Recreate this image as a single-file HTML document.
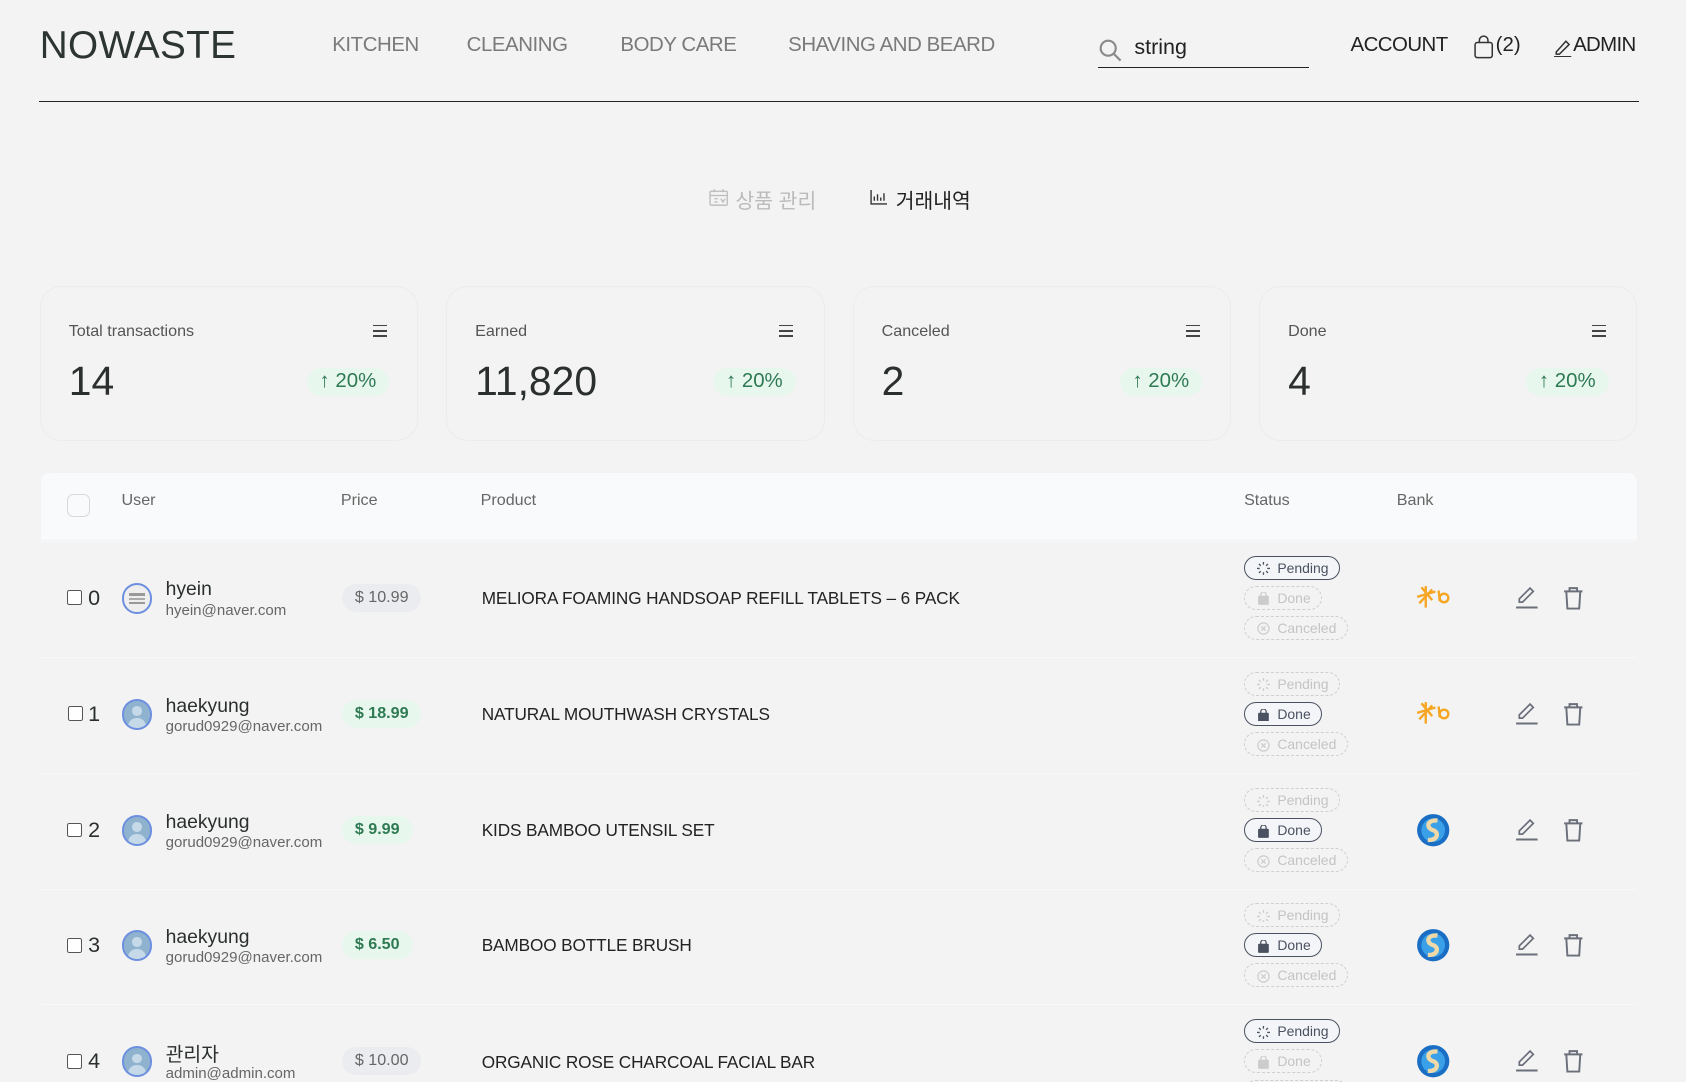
<!DOCTYPE html>
<html><head><meta charset="utf-8">
<style>
html,body{margin:0;padding:0;background:#f3f3f3;overflow:hidden}
#w{position:relative;width:1568px;height:1006px;zoom:1.07526;font-family:"Liberation Sans","Noto Sans CJK KR",sans-serif;color:#2a2f2d}
.a{position:absolute;white-space:nowrap}
.nav{font-size:19px;color:#7a7a7a;top:32px;letter-spacing:-0.4px}
.card{position:absolute;top:266px;width:350px;height:142px;border:1px solid #ececec;border-radius:20px;background:#f3f3f3}
.card .lb{position:absolute;left:26px;top:33px;font-size:15px;color:#555}
.card .mn{position:absolute;right:28px;top:35px;width:13px}
.card .mn i{display:block;height:1.5px;background:#444;margin-bottom:3.5px}
.card .v{position:absolute;left:26px;top:66px;font-size:38px;color:#2b2f2e}
.card .bd{position:absolute;right:26px;top:75px;height:26px;padding:0 12px;border-radius:13px;background:#e8f7ee;color:#2e7a52;font-size:19px;line-height:26px}
.th{font-size:15px;color:#666;top:457px}
.row{position:absolute;left:38px;width:1484px;height:107px;border-top:1px solid #f8f8f8}
.cb{position:absolute;left:24px;width:12px;height:12px;border:1.5px solid #555;border-radius:2px;background:#fff}
.av{position:absolute;width:25px;height:25px;border:2px solid #6d8fe0;border-radius:50%;background:#8fb3cf;overflow:hidden}
.av i{position:absolute;left:8px;top:5px;width:9px;height:9px;border-radius:50%;background:#c5d9e8}
.av b{position:absolute;left:4px;top:16px;width:17px;height:12px;border-radius:8px 8px 0 0;background:#c5d9e8}
.pr{position:absolute;height:26px;line-height:26px;padding:0 12px;border-radius:13px;font-size:15px}
.pg{background:#ebecef;color:#666}
.pgr{background:#e8f7ee;color:#2e7a52;font-weight:bold}
.pd{font-size:16px;color:#222;letter-spacing:-0.1px}
.st{position:absolute;left:1157px;height:22px;line-height:22px;border-radius:12px;font-size:13px;padding:0 10px 0 30px;box-sizing:border-box}
.st.on{border:1px solid #4a5160;color:#4a5160;background:#f4f5f8}
.st.off{border:1px dashed #cfcfcf;color:#c4c4c4}
.st svg{position:absolute;left:11px;top:5px}
</style></head><body><div id="w">
<div class="a" style="left:37px;top:22px;font-size:36px;color:#2c3531;letter-spacing:0.3px">NOWASTE</div>
<div class="a nav" style="left:309px">KITCHEN</div>
<div class="a nav" style="left:434px">CLEANING</div>
<div class="a nav" style="left:577px">BODY CARE</div>
<div class="a nav" style="left:733px">SHAVING AND BEARD</div>
<svg class="a" style="left:1021px;top:35px" width="24" height="24" viewBox="0 0 24 24" fill="none" stroke="#8a8a8a" stroke-width="2"><circle cx="9.5" cy="9.5" r="7"/><path d="M14.5 14.5 L21 21"/></svg>
<div class="a" style="left:1055px;top:33px;font-size:20px;color:#222">string</div>
<div class="a" style="left:1021px;top:62px;width:196px;height:1.5px;background:#222"></div>
<div class="a" style="left:1256px;top:32px;font-size:19px;color:#222;letter-spacing:-0.5px">ACCOUNT</div>
<svg class="a" style="left:1371px;top:33px" width="18" height="22" viewBox="0 0 18 22" fill="none" stroke="#333" stroke-width="1.4"><rect x="1" y="7" width="16" height="14" rx="2"/><path d="M5 7V5a4 4 0 0 1 8 0v2"/></svg>
<div class="a" style="left:1391px;top:32px;font-size:19px;color:#222">(2)</div>
<svg class="a" style="left:1444px;top:35px" width="18" height="18" viewBox="0 0 18 18" fill="none" stroke="#333" stroke-width="1.4"><path d="M3 13 L12 3 L15 6 L6 15 L3 15Z"/><path d="M1 17.5H17"/></svg>
<div class="a" style="left:1463px;top:32px;font-size:19px;color:#222;letter-spacing:-0.6px">ADMIN</div>
<div class="a" style="left:36px;top:94px;width:1488px;height:1.3px;background:#222"></div>

<svg class="a" style="left:659px;top:175px" width="18" height="17" viewBox="0 0 18 17" fill="none" stroke="#bbb" stroke-width="1.2"><rect x="1" y="3" width="16" height="13" rx="1"/><path d="M1 7H17M5 1V4M13 1V4M5 10h3M5 13h3M11 10l2 3 2-3"/></svg>
<div class="a" style="left:684px;top:171px;font-size:19px;color:#bbb">상품 관리</div>
<svg class="a" style="left:809px;top:177px" width="16" height="14" viewBox="0 0 16 14" fill="none" stroke="#333" stroke-width="1.3"><path d="M1 0V13H16M4 10V6M7 10V4M10 10V7M13 10V3"/></svg>
<div class="a" style="left:833px;top:171px;font-size:19px;color:#222">거래내역</div>

<div class="card" style="left:37px"><div class="lb">Total transactions</div><div class="mn"><i></i><i></i><i></i></div><div class="v">14</div><div class="bd">↑ 20%</div></div>
<div class="card" style="left:415px"><div class="lb">Earned</div><div class="mn"><i></i><i></i><i></i></div><div class="v">11,820</div><div class="bd">↑ 20%</div></div>
<div class="card" style="left:793px"><div class="lb">Canceled</div><div class="mn"><i></i><i></i><i></i></div><div class="v">2</div><div class="bd">↑ 20%</div></div>
<div class="card" style="left:1171px"><div class="lb">Done</div><div class="mn"><i></i><i></i><i></i></div><div class="v">4</div><div class="bd">↑ 20%</div></div>

<div class="a" style="left:38px;top:440px;width:1484px;height:62px;background:#f9fafb;border-radius:8px 8px 0 0"></div>
<div class="a" style="left:62px;top:459px;width:20px;height:20px;border:1.5px solid #d8d8d8;border-radius:6px;background:#f9fafb"></div>
<div class="a th" style="left:113px">User</div>
<div class="a th" style="left:317px">Price</div>
<div class="a th" style="left:447px">Product</div>
<div class="a th" style="left:1157px">Status</div>
<div class="a th" style="left:1299px">Bank</div>

<svg width="0" height="0" style="position:absolute"><defs>
<g id="spin"><path d="M6 0v2.5M6 9.5V12M0 6h2.5M9.5 6H12M1.8 1.8l1.7 1.7M8.5 8.5l1.7 1.7M1.8 10.2l1.7-1.7M8.5 3.5l1.7-1.7" stroke-width="1.2"/></g>
<g id="bag"><rect x="1" y="3.5" width="10" height="8.5" rx="1" fill="currentColor" stroke="none"/><path d="M3.5 4V2.5a2.5 2.5 0 0 1 5 0V4" stroke-width="1.2"/></g>
<g id="x"><circle cx="6" cy="6" r="5.2" stroke-width="1.1"/><path d="M4 4l4 4M8 4l-4 4" stroke-width="1.1"/></g>
<g id="edit"><path d="M4 15 L4 12 L14 2 L17 5 L7 15Z" fill="none" stroke="#6a6f7a" stroke-width="1.6"/><path d="M1 20H21" stroke="#6a6f7a" stroke-width="1.8"/></g>
<g id="trash"><path d="M2 5H19M7 5V2H14V5M4 5L5 21H16L17 5" fill="none" stroke="#6a6f7a" stroke-width="1.8"/></g>
<g id="kb"><path d="M2 12L19 7M6 3L16 15M10 2L10 22M4 18L16 5" stroke="#f5a623" stroke-width="2.2" fill="none"/><path d="M22 6 L23 16 M23 13 a4 4 0 1 0 8 0 a4 4 0 1 0 -8 0" stroke="#f5a623" stroke-width="2.2" fill="none"/></g>
<g id="sh"><circle cx="16" cy="16" r="15" fill="#1a6fc4"/><circle cx="16" cy="16" r="11" fill="#3aa0e8"/><path d="M20 7 C10 6 9 14 16 16 C22 18 20 26 11 25" stroke="#f0d9a8" stroke-width="4" fill="none"/></g>
</defs></svg>

<!-- row 0 -->
<div class="row" style="top:503px"></div>
<div class="cb" style="left:62px;top:549px;position:absolute"></div><div class="a" style="left:82px;top:545px;font-size:20px">0</div>
<div class="a av" style="left:113px;top:542px;background:#eee"><span style="position:absolute;left:5px;top:8px;width:15px;height:2px;background:#999"></span><span style="position:absolute;left:5px;top:12px;width:15px;height:2px;background:#aaa"></span><span style="position:absolute;left:5px;top:16px;width:15px;height:2px;background:#999"></span></div>
<div class="a" style="left:154px;top:538px;font-size:18px">hyein</div><div class="a" style="left:154px;top:560px;font-size:14px;color:#666">hyein@naver.com</div>
<div class="a pr pg" style="left:318px;top:543px">$ 10.99</div>
<div class="a pd" style="left:448px;top:547px">MELIORA FOAMING HANDSOAP REFILL TABLETS – 6 PACK</div>
<div class="st on" style="top:517px">Pending<svg width="12" height="12" stroke="#4a5160" fill="none"><use href="#spin"/></svg></div>
<div class="st off" style="top:545px">Done<svg width="12" height="12" stroke="#ccc" style="color:#ccc" fill="none"><use href="#bag"/></svg></div>
<div class="st off" style="top:573px">Canceled<svg width="12" height="12" stroke="#ccc" fill="none"><use href="#x"/></svg></div>
<svg class="a" style="left:1316px;top:543px" width="36" height="26"><use href="#kb"/></svg>
<svg class="a" style="left:1409px;top:545px" width="22" height="22"><use href="#edit"/></svg>
<svg class="a" style="left:1453px;top:545px" width="22" height="22"><use href="#trash"/></svg>

<!-- row 1 -->
<div class="row" style="top:611px"></div>
<div class="cb" style="left:63px;top:657px;position:absolute"></div><div class="a" style="left:82px;top:653px;font-size:20px">1</div>
<div class="a av" style="left:113px;top:650px"><i></i><b></b></div>
<div class="a" style="left:154px;top:646px;font-size:18px">haekyung</div><div class="a" style="left:154px;top:668px;font-size:14px;color:#666">gorud0929@naver.com</div>
<div class="a pr pgr" style="left:318px;top:651px">$ 18.99</div>
<div class="a pd" style="left:448px;top:655px">NATURAL MOUTHWASH CRYSTALS</div>
<div class="st off" style="top:625px">Pending<svg width="12" height="12" stroke="#ccc" fill="none"><use href="#spin"/></svg></div>
<div class="st on" style="top:653px">Done<svg width="12" height="12" stroke="#4a5160" style="color:#4a5160" fill="none"><use href="#bag"/></svg></div>
<div class="st off" style="top:681px">Canceled<svg width="12" height="12" stroke="#ccc" fill="none"><use href="#x"/></svg></div>
<svg class="a" style="left:1316px;top:651px" width="36" height="26"><use href="#kb"/></svg>
<svg class="a" style="left:1409px;top:653px" width="22" height="22"><use href="#edit"/></svg>
<svg class="a" style="left:1453px;top:653px" width="22" height="22"><use href="#trash"/></svg>

<!-- row 2 -->
<div class="row" style="top:719px"></div>
<div class="cb" style="left:62px;top:765px;position:absolute"></div><div class="a" style="left:82px;top:761px;font-size:20px">2</div>
<div class="a av" style="left:113px;top:758px"><i></i><b></b></div>
<div class="a" style="left:154px;top:754px;font-size:18px">haekyung</div><div class="a" style="left:154px;top:776px;font-size:14px;color:#666">gorud0929@naver.com</div>
<div class="a pr pgr" style="left:318px;top:759px">$ 9.99</div>
<div class="a pd" style="left:448px;top:763px">KIDS BAMBOO UTENSIL SET</div>
<div class="st off" style="top:733px">Pending<svg width="12" height="12" stroke="#ccc" fill="none"><use href="#spin"/></svg></div>
<div class="st on" style="top:761px">Done<svg width="12" height="12" stroke="#4a5160" style="color:#4a5160" fill="none"><use href="#bag"/></svg></div>
<div class="st off" style="top:789px">Canceled<svg width="12" height="12" stroke="#ccc" fill="none"><use href="#x"/></svg></div>
<svg class="a" style="left:1317px;top:756px" width="34" height="34"><use href="#sh"/></svg>
<svg class="a" style="left:1409px;top:761px" width="22" height="22"><use href="#edit"/></svg>
<svg class="a" style="left:1453px;top:761px" width="22" height="22"><use href="#trash"/></svg>

<!-- row 3 -->
<div class="row" style="top:827px"></div>
<div class="cb" style="left:62px;top:872px;position:absolute"></div><div class="a" style="left:82px;top:868px;font-size:20px">3</div>
<div class="a av" style="left:113px;top:865px"><i></i><b></b></div>
<div class="a" style="left:154px;top:861px;font-size:18px">haekyung</div><div class="a" style="left:154px;top:883px;font-size:14px;color:#666">gorud0929@naver.com</div>
<div class="a pr pgr" style="left:318px;top:866px">$ 6.50</div>
<div class="a pd" style="left:448px;top:870px">BAMBOO BOTTLE BRUSH</div>
<div class="st off" style="top:840px">Pending<svg width="12" height="12" stroke="#ccc" fill="none"><use href="#spin"/></svg></div>
<div class="st on" style="top:868px">Done<svg width="12" height="12" stroke="#4a5160" style="color:#4a5160" fill="none"><use href="#bag"/></svg></div>
<div class="st off" style="top:896px">Canceled<svg width="12" height="12" stroke="#ccc" fill="none"><use href="#x"/></svg></div>
<svg class="a" style="left:1317px;top:863px" width="34" height="34"><use href="#sh"/></svg>
<svg class="a" style="left:1409px;top:868px" width="22" height="22"><use href="#edit"/></svg>
<svg class="a" style="left:1453px;top:868px" width="22" height="22"><use href="#trash"/></svg>

<!-- row 4 -->
<div class="row" style="top:934px"></div>
<div class="cb" style="left:62px;top:980px;position:absolute"></div><div class="a" style="left:82px;top:976px;font-size:20px">4</div>
<div class="a av" style="left:113px;top:973px"><i></i><b></b></div>
<div class="a" style="left:154px;top:966px;font-size:18px">관리자</div><div class="a" style="left:154px;top:990px;font-size:14px;color:#666">admin@admin.com</div>
<div class="a pr pg" style="left:318px;top:974px">$ 10.00</div>
<div class="a pd" style="left:448px;top:978px">ORGANIC ROSE CHARCOAL FACIAL BAR</div>
<div class="st on" style="top:948px">Pending<svg width="12" height="12" stroke="#4a5160" fill="none"><use href="#spin"/></svg></div>
<div class="st off" style="top:976px">Done<svg width="12" height="12" stroke="#ccc" style="color:#ccc" fill="none"><use href="#bag"/></svg></div>
<div class="st off" style="top:1004px">Canceled</div>
<svg class="a" style="left:1317px;top:971px" width="34" height="34"><use href="#sh"/></svg>
<svg class="a" style="left:1409px;top:976px" width="22" height="22"><use href="#edit"/></svg>
<svg class="a" style="left:1453px;top:976px" width="22" height="22"><use href="#trash"/></svg>
</div></body></html>
